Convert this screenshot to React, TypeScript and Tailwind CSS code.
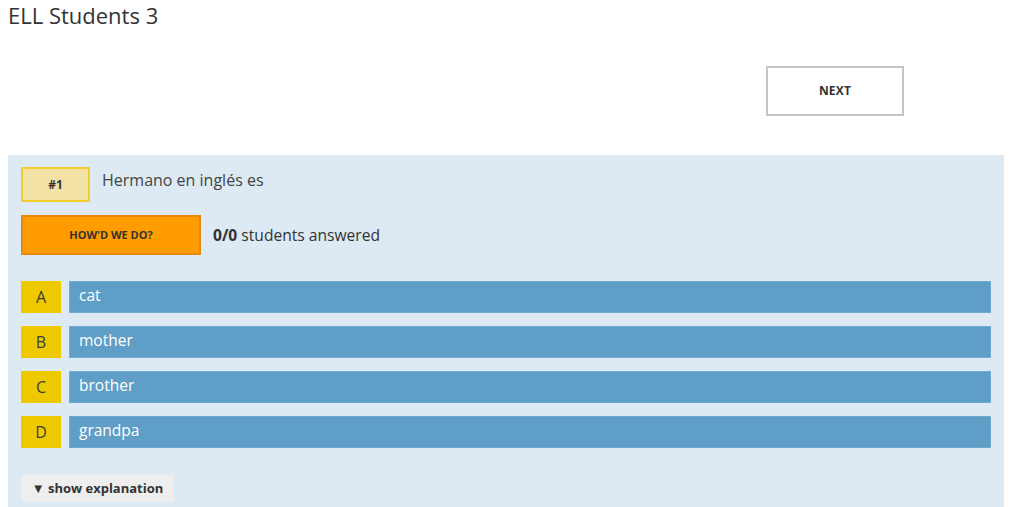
const OPTIONS = [
  { letter: 'A', text: 'cat' },
  { letter: 'B', text: 'mother' },
  { letter: 'C', text: 'brother' },
  { letter: 'D', text: 'grandpa' },
];

export default function App() {
  return (
    <div className="w-[1024px] h-[507px] overflow-hidden bg-white font-['Open_Sans',sans-serif] text-[#333]">
      {/* Title */}
      <h1 className="pl-[8px] pt-[1px] text-[22px] leading-[28px] text-[#333]">ELL Students 3</h1>

      {/* Next */}
      <div className="flex justify-end pr-[120px] mt-[37px]">
        <button className="w-[138px] h-[50px] border-2 border-[#c4c4c4] bg-white text-[12px] font-bold text-[#333] tracking-[0.2px]">
          NEXT
        </button>
      </div>

      {/* Question panel */}
      <div className="mt-[39px] ml-[8px] w-[996px] h-[400px] bg-[#dde9f3] pt-[12px] pl-[13px] pr-[13px]">
        <div className="flex items-center gap-[12px]">
          <div className="w-[69px] h-[35px] bg-[#f2e2a6] border-2 border-[#f2cd2e] flex items-center justify-center text-[12px] font-bold text-[#333]">
            #1
          </div>
          <span className="text-[16px] text-[#444] -mt-[9px]">Hermano en inglés es</span>
        </div>

        <div className="flex items-center gap-[12px] mt-[13px]">
          <button className="w-[180px] h-[40px] bg-[#ff9c00] border-2 border-[#e8880a] text-[11px] font-bold text-[#333]">
            HOW&apos;D WE DO?
          </button>
          <span className="text-[15.6px] text-[#333] mt-[1px]">
            <b>0/0</b> students answered
          </span>
        </div>

        <div className="flex flex-col gap-[13px] mt-[26px]">
          {OPTIONS.map((o) => (
            <div key={o.letter} className="flex gap-[8px] h-[32px]">
              <div className="w-[40px] bg-[#eec900] flex items-center justify-center text-[16px] text-[#3d3d3d]">
                {o.letter}
              </div>
              <div className="flex-1 bg-[#5f9ec6] border border-[#73abd0] flex items-center pl-[9px] pb-[2px] text-[15.5px] text-white">
                {o.text}
              </div>
            </div>
          ))}
        </div>

        <button className="mt-[27px] w-[153px] h-[27px] bg-[#eeeeee] text-[13px] font-bold text-[#333] flex items-center justify-center">
          ▼ show explanation
        </button>
      </div>
    </div>
  );
}
